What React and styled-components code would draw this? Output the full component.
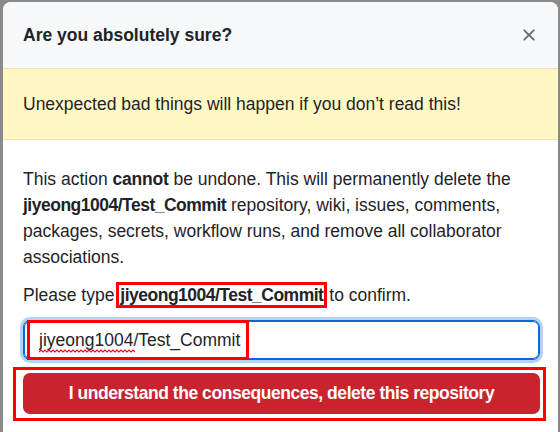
import styled, { createGlobalStyle } from 'styled-components';

const GlobalStyle = createGlobalStyle`
  html, body {
    margin: 0;
    padding: 0;
    background: #8a8a8a;
    font-family: "Segoe UI", "Liberation Sans", Arial, sans-serif;
    color: #1f2328;
  }
`;

const Page = styled.div`
  padding: 2px 2px 0 3px;
  height: 432px;
  overflow: hidden;
  box-sizing: border-box;
`;

const Dialog = styled.div`
  background: #ffffff;
  border-radius: 8px 8px 0 0;
  overflow: hidden;
  height: 460px;
`;

const Header = styled.div`
  display: flex;
  align-items: center;
  justify-content: space-between;
  background: #f6f8fa;
  height: 66px;
  padding: 0 20px;
`;

const Title = styled.h1`
  margin: 0;
  font-size: 17.5px;
  font-weight: 600;
  line-height: 26px;
`;

const CloseButton = styled.button`
  display: flex;
  align-items: center;
  justify-content: center;
  width: 24px;
  height: 24px;
  margin-right: -3px;
  padding: 0;
  border: none;
  background: none;
  color: #656d76;
  cursor: pointer;
`;

const Flash = styled.div`
  background: #fff8c5;
  border-top: 1px solid #f2e2a8;
  border-bottom: 1px solid #f2e2a8;
  padding: 22px 20px;
  font-size: 17.5px;
  line-height: 26px;
`;

const Body = styled.div`
  padding: 26px 18px 0 20px;
  font-size: 17.5px;
  line-height: 26px;
`;

const Paragraph = styled.p`
  margin: 0 0 12px;
`;

const Bold = styled.strong`
  font-weight: 600;
  letter-spacing: ${(p) => (p.tight ? '-0.5px' : '-0.2px')};
`;

const Marked = styled(Bold)`
  outline: 3px solid #ff0000;
  padding: 0 1px;
`;

const InputWrap = styled.div`
  position: relative;
  margin-top: 9px;
`;

const Input = styled.input`
  display: block;
  width: 100%;
  box-sizing: border-box;
  height: 40px;
  padding: 0 15px;
  font-family: inherit;
  font-size: 17.5px;
  color: #1f2328;
  background: #fff;
  border: 1px solid #0969da;
  border-radius: 7px;
  outline: none;
  box-shadow: inset 0 0 0 1px #0969da, 0 0 0 3px rgba(9, 105, 218, 0.3);
`;

const Squiggle = styled.svg`
  position: absolute;
  left: 16px;
  top: 29px;
  pointer-events: none;
`;

const Annotation = styled.div`
  position: absolute;
  top: ${(p) => p.top}px;
  left: ${(p) => p.left}px;
  width: ${(p) => p.width}px;
  height: ${(p) => p.height}px;
  border: 3px solid #ff0000;
  box-sizing: border-box;
  pointer-events: none;
`;

const ButtonWrap = styled.div`
  position: relative;
  margin-top: 13px;
`;

const DangerButton = styled.button`
  display: block;
  width: 100%;
  height: 41px;
  border: none;
  border-radius: 7px;
  background: #c9232f;
  color: #ffffff;
  font-family: inherit;
  font-size: 17.5px;
  font-weight: 700;
  letter-spacing: -0.45px;
  cursor: pointer;
`;

export default function App() {
  const repo = 'jiyeong1004/Test_Commit';

  return (
    <>
      <GlobalStyle />
      <Page>
        <Dialog>
          <Header>
            <Title>Are you absolutely sure?</Title>
            <CloseButton aria-label="Close">
              <svg width="20" height="20" viewBox="0 0 16 16" fill="currentColor">
                <path d="M3.72 3.72a.75.75 0 0 1 1.06 0L8 6.94l3.22-3.22a.749.749 0 0 1 1.275.326.749.749 0 0 1-.215.734L9.06 8l3.22 3.22a.749.749 0 0 1-.326 1.275.749.749 0 0 1-.734-.215L8 9.06l-3.22 3.22a.751.751 0 0 1-1.042-.018.751.751 0 0 1-.018-1.042L6.94 8 3.72 4.78a.75.75 0 0 1 0-1.06Z" />
              </svg>
            </CloseButton>
          </Header>
          <Flash>Unexpected bad things will happen if you don’t read this!</Flash>
          <Body>
            <Paragraph>
              This action <Bold>cannot</Bold> be undone. This will permanently delete the{' '}
              <Bold tight>{repo}</Bold> repository, wiki, issues, comments, packages, secrets,
              workflow runs, and remove all collaborator associations.
            </Paragraph>
            <Paragraph>
              Please type <Marked tight>{repo}</Marked> to confirm.
            </Paragraph>
            <InputWrap>
              <Input defaultValue={repo} spellCheck={false} />
              <Squiggle width="96" height="4" viewBox="0 0 96 4">
                <path
                  d="M0 3 L2 1 L4 3 L6 1 L8 3 L10 1 L12 3 L14 1 L16 3 L18 1 L20 3 L22 1 L24 3 L26 1 L28 3 L30 1 L32 3 L34 1 L36 3 L38 1 L40 3 L42 1 L44 3 L46 1 L48 3 L50 1 L52 3 L54 1 L56 3 L58 1 L60 3 L62 1 L64 3 L66 1 L68 3 L70 1 L72 3 L74 1 L76 3 L78 1 L80 3 L82 1 L84 3 L86 1 L88 3 L90 1 L92 3 L94 1 L96 3"
                  fill="none"
                  stroke="#e0101e"
                  strokeWidth="1.2"
                />
              </Squiggle>
              <Annotation top={0} left={4} width={222} height={40} />
            </InputWrap>
            <ButtonWrap>
              <DangerButton>I understand the consequences, delete this repository</DangerButton>
              <Annotation top={-6} left={-10} width={533} height={54} />
            </ButtonWrap>
          </Body>
        </Dialog>
      </Page>
    </>
  );
}
